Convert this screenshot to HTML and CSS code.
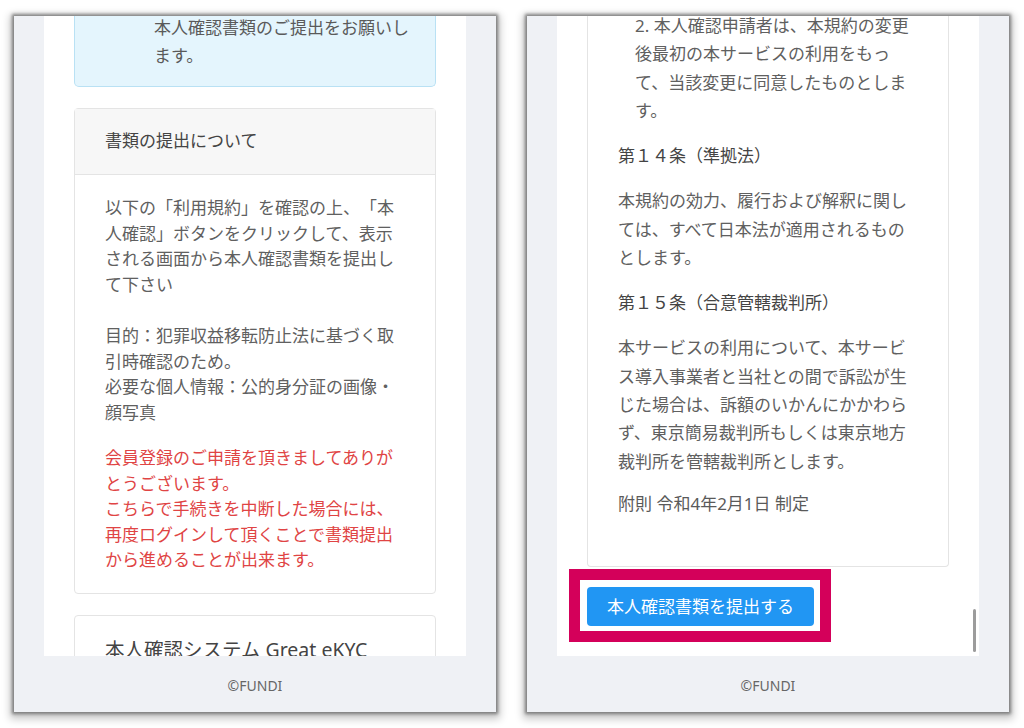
FILE: index.html
```html
<!DOCTYPE html>
<html lang="ja">
<head>
<meta charset="utf-8">
<title>本人確認</title>
<link rel="stylesheet" href="styles.css">
</head>
<body>
<div class="stage">
  <section class="phone">
    <div class="screen">
      <div class="content">
        <div class="alert">本人確認書類のご提出をお願いし<br>ます。</div>
        <div class="card">
          <div class="card-header">書類の提出について</div>
          <div class="card-body">
            <p class="para">以下の「利用規約」を確認の上、「本<br>人確認」ボタンをクリックして、表示<br>される画面から本人確認書類を提出し<br>て下さい</p>
            <p class="para gap-lg">目的：犯罪収益移転防止法に基づく取<br>引時確認のため。<br>必要な個人情報：公的身分証の画像・<br>顔写真</p>
            <p class="para notice">会員登録のご申請を頂きましてありが<br>とうございます。<br>こちらで手続きを中断した場合には、<br>再度ログインして頂くことで書類提出<br>から進めることが出来ます。</p>
          </div>
        </div>
        <div class="card card-plain">
          <h2 class="card-title">本人確認システム Great eKYC</h2>
        </div>
      </div>
    </div>
    <footer class="footer">©FUNDI</footer>
  </section>

  <section class="phone">
    <div class="screen">
      <div class="content">
        <div class="terms">
          <p class="term-item">2. 本人確認申請者は、本規約の変更<br>後最初の本サービスの利用をもっ<br>て、当該変更に同意したものとしま<br>す。</p>
          <h3 class="term-head">第１４条（準拠法）</h3>
          <p class="term-text">本規約の効力、履行および解釈に関し<br>ては、すべて日本法が適用されるもの<br>とします。</p>
          <h3 class="term-head">第１５条（合意管轄裁判所）</h3>
          <p class="term-text">本サービスの利用について、本サービ<br>ス導入事業者と当社との間で訴訟が生<br>じた場合は、訴額のいかんにかかわら<br>ず、東京簡易裁判所もしくは東京地方<br>裁判所を管轄裁判所とします。</p>
          <p class="term-date">附則 令和4年2月1日 制定</p>
        </div>
        <div class="actions">
          <button class="btn-submit" type="button">本人確認書類を提出する<span class="highlight"></span></button>
        </div>
      </div>
      <span class="scrollbar"></span>
    </div>
    <footer class="footer">©FUNDI</footer>
  </section>
</div>
</body>
</html>
```

FILE: styles.css
```css
* { box-sizing: border-box; }

html, body {
  margin: 0;
  padding: 0;
  background: #ffffff;
}

body {
  width: 1024px;
  height: 728px;
  overflow: hidden;
  font-family: "Noto Sans", "Noto Sans CJK JP", sans-serif;
  color: #606060;
  text-spacing-trim: space-all;
}

.stage {
  display: flex;
  gap: 31px;
  padding: 16px 0 0 14px;
}

.phone {
  width: 482px;
  height: 696px;
  display: flex;
  flex-direction: column;
  background: #eff1f5;
  box-shadow: 0 0 3px 2px rgba(90, 90, 90, 0.7), 0 3px 8px 4px rgba(0, 0, 0, 0.22);
}

.screen {
  position: relative;
  flex: 1;
  margin: 0 30px;
  background: #ffffff;
  overflow: hidden;
}

.content {
  padding: 0 30px;
}

.alert {
  margin-top: -2px;
  padding: 0 20px 16px 79px;
  background: #e4f5fd;
  border: 1px solid #b9e1f4;
  border-top: none;
  border-radius: 0 0 5px 5px;
  font-size: 17px;
  line-height: 28px;
  color: #5a5a5a;
}

.card {
  margin-top: 21px;
  border: 1px solid #e4e4e4;
  border-radius: 4px;
  background: #ffffff;
}

.card-header {
  padding: 19px 30px 21px;
  background: #f7f7f7;
  border-bottom: 1px solid #e4e4e4;
  font-size: 17px;
  line-height: 25px;
  color: #444444;
}

.card-body {
  padding: 20px 30px 20px;
}

.para {
  margin: 0;
  font-size: 17px;
  line-height: 25.5px;
  color: #606060;
}

.gap-lg { margin-top: 26px; }

.notice {
  margin-top: 20px;
  color: #e04444;
}

.card-plain {
  padding: 20px 30px;
}

.card-title {
  margin: 0;
  font-size: 19.5px;
  font-weight: normal;
  line-height: 28px;
  color: #444444;
}

.terms {
  margin-top: -4px;
  padding: 0 30px 50px 30px;
  border: 1px solid #e4e4e4;
  border-top: none;
  border-radius: 0 0 4px 4px;
}

.term-item {
  margin: 0;
  padding-left: 17px;
  font-size: 17px;
  line-height: 28.33px;
  color: #606060;
}

.term-head {
  margin: 19px 0 0;
  font-size: 17px;
  font-weight: normal;
  line-height: 24px;
  color: #444444;
}

.term-text {
  margin: 19px 0 0;
  font-size: 17px;
  line-height: 28.33px;
  color: #606060;
}

.term-date {
  margin: 16px 0 0;
  font-size: 17px;
  line-height: 24px;
  color: #5a5a5a;
}

.actions {
  margin-top: 20px;
  display: flex;
}

.btn-submit {
  position: relative;
  padding: 7px 20px;
  border: none;
  border-radius: 4px;
  background: #2196f3;
  color: #ffffff;
  font-family: "Noto Sans", "Noto Sans CJK JP", sans-serif;
  font-size: 17px;
  line-height: 25px;
  text-spacing-trim: space-all;
}

.highlight {
  position: absolute;
  top: -18px;
  left: -18px;
  right: -17px;
  bottom: -16px;
  border: 11px solid #d4005a;
}

.scrollbar {
  position: absolute;
  right: 3px;
  bottom: 4px;
  width: 3px;
  height: 43px;
  border-radius: 2px;
  background: #9c9c9c;
}

.footer {
  height: 56px;
  display: flex;
  align-items: center;
  justify-content: center;
  padding-top: 3px;
  font-size: 14px;
  color: #666666;
}
```
